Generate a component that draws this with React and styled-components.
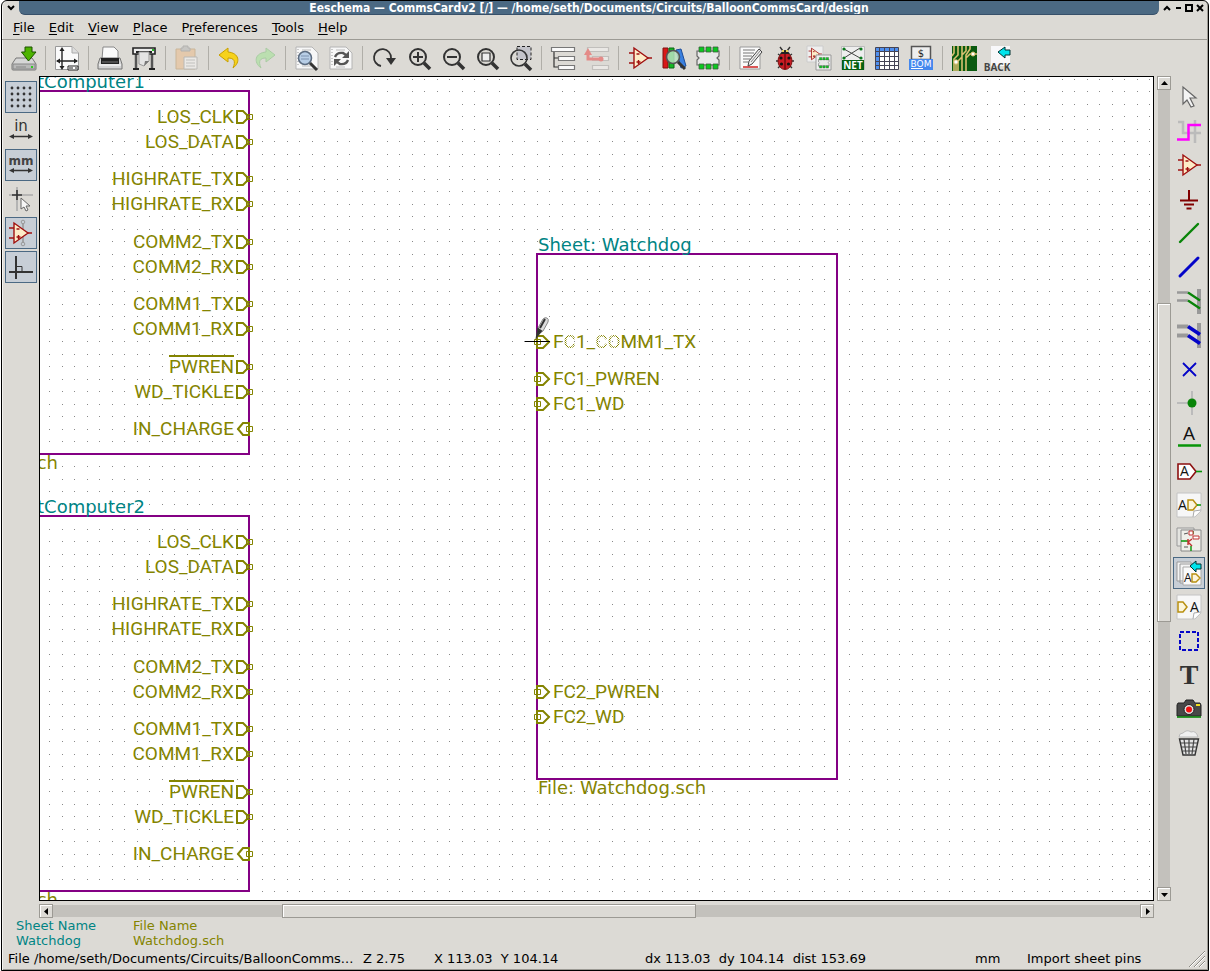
import React from 'react';
import styled, { createGlobalStyle, css } from 'styled-components';

const GlobalStyle = createGlobalStyle`
  * { box-sizing: border-box; }
  html, body, #root { height: 100%; }
  body { margin: 0; background: #fff; overflow: hidden; }
`;

const ui = '"DejaVu Sans", Verdana, sans-serif';
const face = '#dcdad5';
const trough = '#c3c1bc';
const edge = '#9c9a94';
const olive = '#848400';
const teal = '#008484';
const purple = '#840084';

const Window = styled.div`
  display: flex;
  flex-direction: column;
  height: 100%;
  min-height: 480px;
  margin: 0 1px;
  border: 1px solid #000;
  border-radius: 6px 6px 0 0;
  background: ${face};
  box-shadow: inset 1px 0 #f4f3f0, inset -1px -1px #9c9a94;
  color: #000;
  font: 13px/15px ${ui};
  overflow: hidden;
`;

const TitleBar = styled.header`
  display: flex;
  flex: none;
  height: 14px;
`;

const Title = styled.h1`
  flex: 1;
  margin: 0;
  overflow: hidden;
  border-bottom: 1px solid #37506a;
  border-radius: 0 0 6px 6px;
  background: #4b6983;
  color: #fff;
  font: bold 12px/14px "DejaVu Sans Condensed", ${ui};
  text-align: center;
  white-space: nowrap;
`;

const TitleButtons = styled.div`
  display: flex;
  align-items: center;
  justify-content: center;
  width: ${(p) => p.$width}px;
  gap: 1px;
`;

const TitleButton = styled.button`
  display: flex;
  width: 10px;
  height: 12px;
  padding: 1px 0;
  border: 0;
  background: none;
`;

const MenuBar = styled.nav`
  display: flex;
  flex: none;
  height: 25px;
  padding: 0 4px;
  border-bottom: 1px solid ${edge};
`;

const MenuItem = styled.button`
  padding: 1px 7px 0;
  border: 0;
  background: none;
  color: #000;
  font: 13px/24px ${ui};

  u { text-underline-offset: 2px; }
`;

const ToolBar = styled.div`
  display: flex;
  flex: none;
  align-items: center;
  height: 36px;
  padding: 0 5px;
`;

const ToolButton = styled.button`
  display: flex;
  flex: none;
  align-items: center;
  justify-content: center;
  width: 34px;
  height: 34px;
  padding: 0;
  border: 0;
  background: none;

  &:disabled { opacity: 0.4; }
`;

const Separator = styled.span`
  flex: none;
  width: 1px;
  height: 24px;
  margin: 0 4px;
  background: #b0aea8;
`;

const Workspace = styled.div`
  display: grid;
  flex: 1;
  grid-template-columns: 37px minmax(0, 1fr) 14px 37px;
  grid-template-rows: minmax(0, 1fr) 14px;
  row-gap: 3px;
  min-height: 0;
`;

const SideBar = styled.div`
  display: flex;
  grid-column: ${(p) => p.$column};
  grid-row: 1 / 3;
  flex-direction: column;
  gap: 2px;
  padding: 5px 2px 0 ${(p) => (p.$column === 1 ? 3 : 2)}px;
`;

const SideButton = styled.button`
  display: flex;
  flex: none;
  align-items: center;
  justify-content: center;
  width: 32px;
  height: 32px;
  padding: 0;
  border: 1px solid transparent;
  background: none;
  ${(p) => p.$active && css`
    border-color: #4b6983;
    background: #c7ced6;
  `}
`;

const Canvas = styled.main`
  position: relative;
  grid-column: 2;
  grid-row: 1;
  margin-right: 3px;
  border: 1px solid #000;
  background: #fff;
  overflow: hidden;
`;

const GridDots = styled.svg`
  display: block;
  width: 100%;
  height: 100%;
`;

const Sheet = styled.section`
  position: absolute;
  left: ${(p) => p.$x}px;
  top: ${(p) => p.$y}px;
  width: ${(p) => p.$w}px;
  height: ${(p) => p.$h}px;
  border: 2px solid ${purple};
`;

const SheetText = styled.div`
  position: absolute;
  ${(p) => (p.$side === 'right' ? 'right: 103px;' : 'left: 0;')}
  ${(p) => (p.$at === 'top' ? 'bottom: 100%;' : 'top: 100%;')}
  color: ${(p) => (p.$at === 'top' ? teal : olive)};
  font: 18px/20px ${ui};
  white-space: pre;
`;

const FileText = styled(SheetText)`
  ${(p) => p.$side === 'right' && 'right: 190px;'}
`;

const Pin = styled.div`
  position: absolute;
  top: ${(p) => p.$y}px;
  ${(p) => (p.$side === 'right' ? 'right: -5px;' : 'left: -4px;')}
  display: flex;
  flex-direction: ${(p) => (p.$side === 'right' ? 'row-reverse' : 'row')};
  align-items: center;
  gap: 2px;
  height: 14px;
  color: ${olive};
  font: 19px/14px Roboto, "Liberation Sans", sans-serif;
  white-space: nowrap;

  svg { flex: none; }
`;

const PinName = styled.span`
  position: relative;
  ${(p) => p.$barred && css`
    &::before {
      content: '';
      position: absolute;
      top: -5px;
      left: 0;
      right: 0;
      height: 2px;
      background: ${olive};
    }
  `}
`;

const Faded = styled.span`
  mask-image: repeating-conic-gradient(#000 0 25%, transparent 0 50%);
  mask-size: 2px 2px;
`;

const Pointer = styled.svg`
  position: absolute;
  left: 485px;
  top: 238px;
`;

const Scroller = styled.div`
  display: flex;
  flex-direction: ${(p) => (p.$vertical ? 'column' : 'row')};
  grid-column: ${(p) => (p.$vertical ? 3 : 2)};
  grid-row: ${(p) => (p.$vertical ? 1 : 2)};
  margin-right: ${(p) => (p.$vertical ? 0 : 3)}px;
`;

const ScrollButton = styled.button`
  display: flex;
  flex: none;
  align-items: center;
  justify-content: center;
  width: 14px;
  height: 14px;
  padding: 0;
  border: 1px solid ${edge};
  background: ${face};
  box-shadow: inset 1px 1px #fff;
`;

const Trough = styled.span`
  flex: ${(p) => p.$part} 1 0;
  margin: ${(p) => (p.$vertical ? '0 1px' : '1px 0')};
  background: ${trough};
`;

const Thumb = styled.span`
  flex: ${(p) => p.$part} 1 0;
  border: 1px solid ${edge};
  background: ${face};
  box-shadow: inset 1px 1px #fff;
`;

const MessagePanel = styled.dl`
  display: flex;
  flex: none;
  gap: 37px;
  margin: 0;
  padding: 0 14px;
  height: 31px;
`;

const Message = styled.div`
  color: ${(p) => p.$color};

  dt, dd { margin: 0; }
`;

const StatusBar = styled.footer`
  position: relative;
  display: grid;
  flex: none;
  grid-template-columns: 355fr 71fr 211fr 330fr 52fr 181fr;
  height: 21px;
  padding-left: 6px;
  line-height: 19px;
  white-space: pre;

  span { min-width: 0; }
`;

const Grip = styled.svg`
  position: absolute;
  right: 3px;
  bottom: 3px;
`;

const page = '#f7f7f7';
const ink = '#333';

const OpAmp = ({ x = 0, y = 0, s = 1 }) => (
  <g transform={`translate(${x} ${y}) scale(${s})`} fill="none" stroke="#a01010" strokeWidth="1.4">
    <path d="M6 2v20l14-10z" fill="#fdecc8" />
    <path d="M1 7h5M1 17h5M20 12h4M8.500 8h3M8.500 16h4M10.500 14v4" />
  </g>
);

const Chip = ({ x = 0, y = 0, s = 1 }) => (
  <g transform={`translate(${x} ${y}) scale(${s})`}>
    <path d="M1 5h22v5l-2 2 2 2v5H1v-5l2-2-2-2z" fill="#e8e8e8" stroke="#666" strokeWidth="1.200" />
    <path d="M3 1h5v5H3zM10 1h5v5h-5zM17 1h5v5h-5zM3 18h5v5H3zM10 18h5v5h-5zM17 18h5v5h-5z" fill="#0bc81f" stroke="#3c5c40" strokeWidth=".8" />
  </g>
);

const Lens = ({ children }) => (
  <g fill="none" stroke={ink}>
    <circle cx="12" cy="11" r="8" strokeWidth="2" />
    <path d="M18 17l6 6" strokeWidth="3.500" />
    {children}
  </g>
);

const SheetPage = () => (
  <path d="M1 1h16l6 6v16H1z" fill={page} stroke="#b4b4b4" />
);

const Label = ({ x, y, size = 14, children }) => (
  <text x={x} y={y} fontSize={size} fontFamily="Open Sans, sans-serif" fill="#111">{children}</text>
);

const Curl = () => (
  <g>
    <path d="M0 0h24v18l-6 6H0z" fill={page} stroke="#c4c4c4" />
    <path d="M24 17l-7 1-1 6" fill="#fff" stroke="#aaa" />
  </g>
);

const art = {
  save: (
    <g>
      <path d="M4 12h16l4 6v5q0 1-1 1H1q-1 0-1-1v-5z" fill="#d6d6d6" stroke="#777" />
      <path d="M1 18h22v5H1z" fill="#b9b9b9" stroke="#888" />
      <path d="M4 21h10" stroke="#888" />
      <path d="M19 20h2v2h-2z" fill="#2ecc1f" />
      <path d="M13 1h7v5h4l-7.500 9L9.500 6H13z" fill="#4db300" stroke="#1c5200" />
    </g>
  ),
  pageSettings: (
    <g fill="none" stroke="#222">
      <path d="M.5.500H17l6.500 6.500v16.500H.500z" fill="#fafafa" stroke="#999" />
      <path d="M17 .5V7h6.500" fill="#ddd" stroke="#aaa" />
      <path d="M7 3v19M2 15h20" strokeWidth="1.400" />
      <path d="M7 1l2.500 4h-5zM7 24l2.500-4h-5zM1 15l4-2.500v5zM23 15l-4-2.500v5z" fill="#222" stroke="none" />
      <path d="M13 20h10v4H13z" fill="#fff" />
      <path d="M14 22h4M20 22h2" />
    </g>
  ),
  print: (
    <g>
      <path d="M5 1h11l4 4v8H4z" fill="#fafafa" stroke="#888" />
      <path d="M2 12h20l2 6v5H0v-5z" fill="#d4d4d4" stroke="#777" />
      <path d="M3 12h18v6H3z" fill="#222" />
      <path d="M1 19h22" stroke="#fff" />
      <path d="M4 16h16" stroke="#777" />
    </g>
  ),
  plot: (
    <g>
      <path d="M4 7v15M20 7v15" stroke="#555" strokeWidth="2.500" />
      <path d="M1 23h6M17 23h6" stroke="#222" strokeWidth="2" />
      <path d="M1 2h22v6H1z" fill="#ededed" stroke="#222" strokeWidth="1.600" />
      <path d="M4 6h16" stroke="#222" strokeWidth="2" />
      <path d="M7 6h10v9l-5 5-5-2z" fill="#e4e4e4" stroke="#999" />
      <path d="M12 20l1-5h4z" fill="#777" />
      <path d="M20 3h2v2h-2z" fill="#2b2" />
    </g>
  ),
  paste: (
    <g>
      <path d="M1 3h19v20H1z" fill="#f0b070" stroke="#b0803e" />
      <path d="M6 5V2h2V0h5v2h2v3z" fill="#aaa" stroke="#777" />
      <path d="M9 11h13v12H9z" fill="#fff" stroke="#888" />
      <path d="M11 14h9M11 17h9M11 20h9" stroke="#999" />
    </g>
  ),
  undo: <path d="M10 2L1 9l9 7v-4c6 0 8 3 5 10 8-6 6-15-5-16z" fill="#f6d21c" stroke="#c8a000" />,
  redo: <path d="M14 2l9 7-9 7v-4c-6 0-8 3-5 10C1 16 3 7 14 6z" fill="#8be87a" stroke="#5fb45a" />,
  find: (
    <g>
      <SheetPage />
      <path d="M3 3v18" stroke="#999" strokeDasharray="1 2" />
      <path d="M7 4h9M7 20h9" stroke="#bbb" />
      <circle cx="10" cy="12" r="6.500" fill="#b8cee6" stroke="#5c6c80" strokeWidth="1.600" />
      <path d="M6 10h8M6 13h8" stroke="#7c92b0" />
      <path d="M15 17l7 7" stroke={ink} strokeWidth="3" />
    </g>
  ),
  replace: (
    <g>
      <SheetPage />
      <path d="M3 3v18" stroke="#999" strokeDasharray="1 2" />
      <path d="M7 4h9M7 21h9" stroke="#bbb" />
      <path d="M6 11q2-5 8-4l3 2M19 14q-2 5-8 4l-3-2" fill="none" stroke="#555" strokeWidth="2.400" />
      <path d="M20 5v7h-7zM5 20v-7h7z" fill="#555" />
    </g>
  ),
  redraw: (
    <g>
      <path d="M9 20A8.500 8.500 0 1 1 19 12" fill="none" stroke={ink} strokeWidth="1.800" />
      <path d="M14 12h10l-5 7z" fill={ink} />
    </g>
  ),
  zoomIn: <Lens><path d="M7 11h10M12 6v10" strokeWidth="2" /></Lens>,
  zoomOut: <Lens><path d="M7 11h10" strokeWidth="2" /></Lens>,
  zoomFit: <Lens><path d="M8 7h8v8H8z" fill="#eee" strokeWidth="1.200" /></Lens>,
  zoomArea: (
    <g>
      <path d="M9 .5h14v13H9z" fill="#c4c4ca" stroke="#222" strokeDasharray="3 2" />
      <g fill="none" stroke={ink}>
        <circle cx="11" cy="12" r="8" strokeWidth="1.600" />
        <path d="M17 18l6 6" strokeWidth="3.500" />
      </g>
    </g>
  ),
  hierarchy: (
    <g fill="#fafafa" stroke="#777" strokeWidth="1.200">
      <path d="M3 6v15h4M3 12h4" fill="none" stroke={ink} />
      <path d="M.500 1.500h23v4H.500zM7.500 10.500h16v4h-16zM7.500 19.500h16v4h-16z" />
    </g>
  ),
  leaveSheet: (
    <g fill="#fff" stroke="#999" strokeWidth="1.200">
      <path d="M2.500 1.500h21v4h-21zM7.500 10.500h16v4h-16zM7.500 19.500h16v4h-16z" />
      <path d="M3 8v5h13" fill="none" stroke="#f01818" strokeWidth="3" />
      <path d="M3 2l4 7H-1z" fill="#f01818" stroke="none" />
      <circle cx="16" cy="13" r="2.500" fill="#f01818" stroke="none" />
    </g>
  ),
  opamp: <OpAmp />,
  library: (
    <g>
      <path d="M1 2h5v20H1z" fill="#d81818" stroke="#801010" />
      <path d="M7 2h5v20H7z" fill="#14b824" stroke="#0a6412" />
      <path d="M14 4l5-1 5 17-5 2z" fill="#3a80e0" stroke="#1c4c98" />
      <circle cx="11" cy="11" r="6.500" fill="#b8e0c0" fillOpacity=".85" stroke="#555" strokeWidth="1.600" />
      <path d="M16 16l7 7" stroke={ink} strokeWidth="3" />
    </g>
  ),
  footprint: <Chip />,
  annotate: (
    <g>
      <path d="M1 1h20v22H1z" fill="#fafafa" stroke="#999" />
      <path d="M4 4h12M4 7h11M4 10h9M4 13h7M4 16h5" stroke="#777" />
      <path d="M4 21h15" stroke="#d02020" strokeWidth="1.500" />
      <path d="M9 20l1-5L20 3l3 3-10 12z" fill="#eee" stroke="#444" />
      <path d="M12 16l9-11" stroke="#888" />
    </g>
  ),
  erc: (
    <g>
      <path d="M5 8l3 2M19 8l-3 2M3 15h4M21 15h-4M5 22l3-3M19 22l-3-3M7 1l3 4M17 1l-3 4" stroke="#333" strokeWidth="1.400" />
      <ellipse cx="12" cy="15" rx="7" ry="8.500" fill="#c81c24" stroke="#801010" />
      <path d="M7 8q5-8 10 0z" fill="#222" />
      <path d="M9 5h2M13 5h2" stroke="#e8d060" strokeWidth="2" />
      <path d="M12 8v15" stroke="#400" />
      <g fill="#111"><circle cx="8" cy="12" r="1.600" /><circle cx="16" cy="12" r="1.600" /><circle cx="8.500" cy="18" r="1.600" /><circle cx="15.500" cy="18" r="1.600" /></g>
    </g>
  ),
  cvpcb: (
    <g>
      <path d="M0 0h16v16H0z" fill="#eee" stroke="#ccc" />
      <OpAmp x="1" y="1" s=".58" />
      <path d="M9 9h15v15H9z" fill="#f0f0f0" stroke="#999" />
      <Chip x="11" y="11" s=".48" />
    </g>
  ),
  netlist: (
    <g>
      <path d="M.500.500h23v23H.500z" fill="#eee" stroke="#bbb" />
      <path d="M3 3l16 9M19 2L3 12" stroke="#444" />
      <g fill="#0a7a1c"><circle cx="3" cy="3" r="1.600" /><circle cx="20" cy="3" r="1.600" /><circle cx="3" cy="12" r="1.600" /><circle cx="20" cy="12" r="1.600" /></g>
      <path d="M1 14h22v10H1z" fill="#066012" />
      <text x="12" y="23" fontSize="10" fontWeight="bold" fontFamily="Open Sans, sans-serif" fill="#fff" textAnchor="middle">NET</text>
    </g>
  ),
  fields: (
    <g>
      <path d="M.500 1.500h23v22H.500z" fill="#fff" />
      <path d="M.500 1.500h23v4H.500zM.500 1.500h4v22h-4z" fill="#4f8fef" />
      <path d="M.500 1.500h23v22H.500zM4.500 1.500v22M9.500 1.500v22M14.500 1.500v22M19.500 1.500v22M.500 5.500h23M.500 10.500h23M.500 15.500h23M.500 19.500h23" fill="none" stroke="#445" />
    </g>
  ),
  bom: (
    <g>
      <path d="M2.500.500h19v13h-19z" fill="#eee" stroke="#555" strokeWidth="1.500" />
      <text x="12" y="11" fontSize="10" fontFamily="DejaVu Sans, sans-serif" fill="#222" textAnchor="middle">$</text>
      <path d="M0 13h24v11H0z" fill="#4588ee" />
      <text x="12" y="21" fontSize="9" fontFamily="DejaVu Sans, sans-serif" fill="#fff" textAnchor="middle">BOM</text>
      <path d="M2 22.500h12" stroke="#fff" />
    </g>
  ),
  pcb: (
    <g>
      <path d="M0 0h25v25H0z" fill="#0a5a10" />
      <path d="M2 0v7l-2 3M6 0v9l-4 4v12M10 0v11l-4 4v10M14 0v5l-4 4v16M18 0v3l-4 6v16M4 16v9M25 8h-7l-4 4" fill="none" stroke="#d8c070" strokeWidth="1.600" />
      <circle cx="4" cy="16" r="2.200" fill="#fff" stroke="#d8c070" />
      <circle cx="21" cy="8" r="2" fill="#fff" stroke="#d8c070" />
    </g>
  ),
  back: (
    <g>
      <path d="M5 0h19v20H5z" fill="#f8f8fa" />
      <path d="M12 6l7-5v3h5v5h-5v3z" fill="#00e4ec" stroke="#033" />
      <text x="11" y="25" fontSize="10" fontWeight="bold" fontFamily="Open Sans, sans-serif" fill="#444" textAnchor="middle">BACK</text>
    </g>
  ),
  grid: (
    <g fill="#333">
      {[3, 9, 15, 21].flatMap((y) => [3, 9, 15, 21].map((x) => <circle key={`${x}-${y}`} cx={x} cy={y} r="1.400" />))}
    </g>
  ),
  inches: (
    <g>
      <text x="12" y="12" fontSize="15" fontFamily="DejaVu Sans, sans-serif" fill="#333" textAnchor="middle">in</text>
      <path d="M3 17.500h18" stroke="#333" strokeWidth="1.400" /><path d="M0 17.500l5-2.500v5zM24 17.500l-5-2.500v5z" fill="#333" />
    </g>
  ),
  millimetres: (
    <g>
      <text x="12" y="12" fontSize="12" fontWeight="bold" fontFamily="DejaVu Sans, sans-serif" fill="#444" textAnchor="middle">mm</text>
      <path d="M3 17.500h18" stroke="#333" strokeWidth="1.400" /><path d="M0 17.500l5-2.500v5zM24 17.500l-5-2.500v5z" fill="#333" />
    </g>
  ),
  cursorShape: (
    <g>
      <path d="M0 8h24M8 0v24" stroke="#aaa" strokeWidth="1.600" />
      <path d="M3 8h10M8 3v10" stroke="#333" strokeWidth="1.600" />
      <path d="M12 11v11l3-2 2 4 2-1-2-4h4z" fill="#f6f6f6" stroke="#666" />
    </g>
  ),
  hiddenPins: (
    <g>
      <path d="M14 2v20" stroke="#999" strokeWidth="1.600" />
      <g fill="none" stroke="#999"><circle cx="14" cy="1" r="1.800" /><circle cx="14" cy="23" r="1.800" /></g>
      <OpAmp x="-1" />
    </g>
  ),
  ortho: (
    <g fill="none" stroke="#333">
      <path d="M7 1v23M0 17h24" strokeWidth="2" />
      <path d="M7 11.500h6V17" />
    </g>
  ),
  select: <path d="M6 2v17l4-4 4 7 3-1-4-8h6z" fill="#f4f4f4" stroke="#666" strokeWidth="1.200" />,
  highlight: (
    <g fill="none">
      <path d="M1 3h5v11h18M18 1v23" stroke="#bbb" strokeWidth="2.500" />
      <path d="M0 20.500h11.500V6H24" stroke="#f0f" strokeWidth="2.500" />
    </g>
  ),
  power: <path d="M12 3v10M3 13.500h18M7 17.500h10M9.500 21.500h5" stroke="#800000" strokeWidth="2" />,
  wire: <path d="M3 21L21 3" stroke="#088408" strokeWidth="2.400" strokeLinecap="round" />,
  bus: <path d="M3 21L21 3" stroke="#0404c8" strokeWidth="3" strokeLinecap="round" />,
  wireEntry: (
    <g fill="none">
      <path d="M22 0v25" stroke="#999" strokeWidth="4" /><path d="M0 3.500h11M0 11.500h11" stroke="#999" strokeWidth="2.500" />
      <path d="M11 3.500l12 8M11 11.500l12 8" stroke="#088408" strokeWidth="2.200" />
    </g>
  ),
  busEntry: (
    <g fill="none">
      <path d="M22 0v25" stroke="#999" strokeWidth="4" /><path d="M0 3.500h11M0 12.500h11" stroke="#999" strokeWidth="4" />
      <path d="M11 3.500l12 8M11 12.500l12 8" stroke="#0404c8" strokeWidth="3.500" />
    </g>
  ),
  noConnect: <path d="M6 6l13 13M19 6L6 19" stroke="#0404c8" strokeWidth="1.800" />,
  junction: (
    <g>
      <path d="M0 12h15M15 0v24" stroke="#bbb" strokeWidth="2" />
      <circle cx="15" cy="12" r="4.500" fill="#088408" />
    </g>
  ),
  netLabel: (
    <g>
      <text x="12" y="15" fontSize="19" fontFamily="Open Sans, sans-serif" fill="#111" textAnchor="middle">A</text>
      <path d="M1 20.500h23" stroke="#089408" strokeWidth="2.500" />
    </g>
  ),
  globalLabel: (
    <g>
      <path d="M1 5h12l6 7.500-6 7.500H1z" fill="#fff" stroke="#8c1010" strokeWidth="1.600" />
      <path d="M19 12.500h6" stroke="#089408" strokeWidth="1.600" />
      <Label x="3" y="17">A</Label>
    </g>
  ),
  hierLabel: (
    <g>
      <Curl />
      <Label x="1" y="17">A</Label>
      <path d="M11 7h5l4 5-4 5h-5z" fill="#fdf6dc" stroke="#b89010" strokeWidth="1.500" />
      <path d="M20 12h4" stroke="#089408" strokeWidth="1.500" />
    </g>
  ),
  addSheet: (
    <g fill="none">
      <path d="M0 1h17v18H0z" fill="#e4e4e0" stroke="#999" />
      <path d="M4 3h20v21H4z" fill="#efefea" stroke="#888" />
      <path d="M4 14h7M16 4v3M14 19v5" stroke="#089408" strokeWidth="1.400" />
      <path d="M12 4h4v4h-4zM16 9h6v3h-6z" fill="#fff" stroke="#c03030" />
      <path d="M11 12v6M11 15l4-3M11 15l4 4" stroke="#c03030" strokeWidth="1.400" />
      <path d="M7 7l4-1M7 20h4" stroke="#555" />
    </g>
  ),
  importPin: (
    <g>
      <path d="M0 1h14v19H0zM3 3h14v19H3z" fill="#f4f4f4" stroke="#999" />
      <path d="M6 6h18v18H6z" fill="#fafafa" stroke="#aaa" />
      <path d="M13 5l6-5v3h5v5h-5v3z" fill="#00e4ec" stroke="#033" />
      <Label x="7" y="21" size={12}>A</Label>
      <path d="M15 13h4l4 4-4 4h-4z" fill="#fdf6dc" stroke="#b89010" strokeWidth="1.400" />
    </g>
  ),
  sheetPin: (
    <g>
      <Curl />
      <path d="M1 7h5l4 5-4 5H1z" fill="#fdf6dc" stroke="#b89010" strokeWidth="1.500" />
      <Label x="13" y="17">A</Label>
    </g>
  ),
  graphicLine: <path d="M3 3h18v18H3z" fill="none" stroke="#0404c8" strokeWidth="2" strokeDasharray="4 2" />,
  text: (
    <text x="12" y="21" fontSize="28" fontWeight="bold" fontFamily="Liberation Serif, serif" fill="#333" textAnchor="middle">T</text>
  ),
  image: (
    <g>
      <path d="M1 6h6l2-3h7l2 3h5l1 2v11H0V8z" fill="#484848" stroke="#222" />
      <path d="M19 7h4v2h-4z" fill="#f0e020" />
      <circle cx="12" cy="12.500" r="5" fill="#ddd" stroke="#222" />
      <circle cx="12" cy="12.500" r="3" fill="#f01010" />
      <path d="M0 20h24" stroke="#088408" strokeWidth="1.600" />
    </g>
  ),
  trash: (
    <g>
      <path d="M2 6q0-4 4-4 4-4 8-1 5-2 7 5z" fill="#f0f0f0" stroke="#bbb" />
      <path d="M2.500 8h19L18 24H6z" fill="#e4e4e4" stroke="#333" strokeWidth="1.400" />
      <path d="M7 8l2 15M12 8v15M17 8l-2 15M4 12h16M5 16h14M6 20h12" stroke="#444" strokeWidth="1.200" />
    </g>
  ),
};

const Icon = ({ name }) => (
  <svg width="24" height="24" viewBox="0 0 24 24" overflow="visible" aria-hidden="true">{art[name]}</svg>
);

const topTools = [
  [['save', 'Save']],
  [['pageSettings', 'Page settings']],
  [['print', 'Print'], ['plot', 'Plot']],
  [['paste', 'Paste', true]],
  [['undo', 'Undo'], ['redo', 'Redo', true]],
  [['find', 'Find'], ['replace', 'Find and replace']],
  [['redraw', 'Redraw'], ['zoomIn', 'Zoom in'], ['zoomOut', 'Zoom out'], ['zoomFit', 'Zoom to fit'], ['zoomArea', 'Zoom to selection']],
  [['hierarchy', 'Navigate hierarchy'], ['leaveSheet', 'Leave sheet', true]],
  [['opamp', 'Symbol editor'], ['library', 'Browse libraries'], ['footprint', 'Footprint editor']],
  [['annotate', 'Annotate'], ['erc', 'Electrical rules check'], ['cvpcb', 'Assign footprints'], ['netlist', 'Netlist'], ['fields', 'Field table'], ['bom', 'Bill of materials']],
  [['pcb', 'Run PCB editor'], ['back', 'Back-import footprints']],
];

const leftTools = [
  ['grid', 'Show grid', true], ['inches', 'Inches'], ['millimetres', 'Millimetres', true],
  ['cursorShape', 'Cursor shape'], ['hiddenPins', 'Hidden pins', true], ['ortho', 'Orthogonal wires', true],
];

const rightTools = [
  ['select', 'Select'], ['highlight', 'Highlight net'], ['opamp', 'Place symbol'], ['power', 'Place power port'],
  ['wire', 'Place wire'], ['bus', 'Place bus'], ['wireEntry', 'Wire to bus entry'], ['busEntry', 'Bus to bus entry'],
  ['noConnect', 'No connect'], ['junction', 'Junction'], ['netLabel', 'Net label'], ['globalLabel', 'Global label'],
  ['hierLabel', 'Hierarchical label'], ['addSheet', 'Hierarchical sheet'], ['importPin', 'Import sheet pin', true],
  ['sheetPin', 'Sheet pin'], ['graphicLine', 'Graphic line'], ['text', 'Text'], ['image', 'Image'], ['trash', 'Delete'],
];

const menus = ['File', 'Edit', 'View', 'Place', ['P', 'r', 'eferences'], 'Tools', 'Help'];

const computerPins = [
  ['LOS_CLK', 18], ['LOS_DATA', 43], ['HIGHRATE_TX', 80], ['HIGHRATE_RX', 105], ['COMM2_TX', 143], ['COMM2_RX', 168],
  ['COMM1_TX', 205], ['COMM1_RX', 230], ['PWREN', 268, 'bar'], ['WD_TICKLE', 293], ['IN_CHARGE', 330, 'in'],
];

const watchdogPins = [['FC1_PWREN', 117], ['FC1_WD', 142], ['FC2_PWREN', 430], ['FC2_WD', 455]];

const PinMark = ({ side, input }) => {
  const box = side === 'right' ? 10 : 0;
  let d = 'M1 1H7L13 7L7 13H1Z';
  if (input) d = 'M2 7L7 1H13V13H7Z';
  if (side === 'left') d = 'M3 1H9L15 7L9 13H3Z';
  return (
    <svg width="17" height="14" viewBox="0 0 17 14" fill="none" stroke={olive}>
      <path d={d} strokeWidth="2" />
      <path d={`M${box + 0.5} 4.500h6v5h-6z`} />
    </svg>
  );
};

const ComputerSheet = ({ y, h, name }) => (
  <Sheet $x={-260} $y={y} $w={470} $h={h}>
    <SheetText $side="right" $at="top">{name}</SheetText>
    {computerPins.map(([label, top, kind]) => (
      <Pin key={label} $side="right" $y={top}>
        <PinMark side="right" input={kind === 'in'} />
        <PinName $barred={kind === 'bar'}>{label}</PinName>
      </Pin>
    ))}
    <FileText $side="right" $at="bottom">ch</FileText>
  </Sheet>
);

const arrows = {
  up: 'M1 6h7L4.500 2z', down: 'M1 3h7L4.500 7z', left: 'M6 1v7L2 4.500z', right: 'M3 1v7l4-3.500z',
};

const Arrow = ({ to }) => (
  <ScrollButton aria-label={`Scroll ${to}`}>
    <svg width="9" height="9"><path d={arrows[to]} /></svg>
  </ScrollButton>
);

const glyphs = [
  ['Shade', 'M2 7l3-3 3 3'], ['Minimise', 'M3 5h5'], ['Maximise', 'M2 2h6v6H2z'], ['Close', 'M2 2l6 6M8 2L2 8'],
];

const Glyph = ({ d }) => (
  <svg width="10" height="10" fill="none" stroke="#000" strokeWidth="2"><path d={d} /></svg>
);

export default function App() {
  return (
    <>
      <GlobalStyle />
      <Window>
        <TitleBar>
          <TitleButtons $width={17}>
            <TitleButton aria-label="Window menu"><Glyph d="M2 3l3 3 3-3" /></TitleButton>
          </TitleButtons>
          <Title>Eeschema — CommsCardv2 [/] — /home/seth/Documents/Circuits/BalloonCommsCard/design</Title>
          <TitleButtons $width={49}>
            {glyphs.map(([label, d]) => (
              <TitleButton key={label} aria-label={label}><Glyph d={d} /></TitleButton>
            ))}
          </TitleButtons>
        </TitleBar>

        <MenuBar>
          {menus.map((m) => {
            const [pre, key, rest] = Array.isArray(m) ? m : ['', m[0], m.slice(1)];
            return <MenuItem key={key + rest}>{pre}<u>{key}</u>{rest}</MenuItem>;
          })}
        </MenuBar>

        <ToolBar role="toolbar">
          {topTools.map((group, i) => (
            <React.Fragment key={group[0][0]}>
              {i > 0 && <Separator />}
              {group.map(([icon, label, off]) => (
                <ToolButton key={icon} aria-label={label} disabled={!!off}><Icon name={icon} /></ToolButton>
              ))}
            </React.Fragment>
          ))}
        </ToolBar>

        <Workspace>
          <SideBar role="toolbar" $column={1}>
            {leftTools.map(([icon, label, on]) => (
              <SideButton key={icon} aria-label={label} aria-pressed={!!on} $active={on}><Icon name={icon} /></SideButton>
            ))}
          </SideBar>

          <Canvas>
            <GridDots aria-hidden="true">
              <pattern id="dots" width="25" height="25" patternUnits="userSpaceOnUse" fill="#888">
                <rect x="9" y="2" width="1" height="1" />
                <rect x="22" y="2" width="1" height="1" />
                <rect x="9" y="14" width="1" height="1" />
                <rect x="22" y="14" width="1" height="1" />
              </pattern>
              <rect width="100%" height="100%" fill="url(#dots)" />
            </GridDots>

            <ComputerSheet y={13} h={365} name="tComputer1" />
            <ComputerSheet y={438} h={377} name="tComputer2" />

            <Sheet $x={496} $y={176} $w={302} $h={527}>
              <SheetText $at="top">Sheet: Watchdog</SheetText>
              <Pin $side="left" $y={80}>
                <PinMark side="left" />
                <PinName>F<Faded>C</Faded>1_<Faded>CO</Faded>MM1_TX</PinName>
              </Pin>
              {watchdogPins.map(([label, top]) => (
                <Pin key={label} $side="left" $y={top}>
                  <PinMark side="left" />
                  <PinName>{label}</PinName>
                </Pin>
              ))}
              <FileText $at="bottom">File: Watchdog.sch</FileText>
            </Sheet>

            <Pointer width="26" height="28" viewBox="0 0 26 28" aria-hidden="true">
              <path d="M0 26.500h25" stroke="#000" />
              <path d="M12 20l1-7 5-9q2-2 4-1t1 4l-5 9z" fill="#ddd" stroke="#888" />
              <path d="M12 21l1-7 3 2zM15 13l5-9" fill="#222" stroke="#333" strokeWidth="2" />
            </Pointer>
          </Canvas>

          <Scroller $vertical>
            <Arrow to="up" />
            <Trough $vertical $part={214} /><Thumb $part={317} /><Trough $vertical $part={266} />
            <Arrow to="down" />
          </Scroller>

          <SideBar role="toolbar" $column={4}>
            {rightTools.map(([icon, label, on]) => (
              <SideButton key={icon} aria-label={label} $active={on}><Icon name={icon} /></SideButton>
            ))}
          </SideBar>

          <Scroller>
            <Arrow to="left" />
            <Trough $part={229} /><Thumb $part={413} /><Trough $part={445} />
            <Arrow to="right" />
          </Scroller>
        </Workspace>

        <MessagePanel>
          <Message $color={teal}><dt>Sheet Name</dt><dd>Watchdog</dd></Message>
          <Message $color={olive}><dt>File Name</dt><dd>Watchdog.sch</dd></Message>
        </MessagePanel>

        <StatusBar>
          <span>File /home/seth/Documents/Circuits/BalloonComms...</span>
          <span>Z 2.75</span>
          <span>{'X 113.03  Y 104.14'}</span>
          <span>{'dx 113.03  dy 104.14  dist 153.69'}</span>
          <span>mm</span>
          <span>Import sheet pins</span>
          <Grip width="17" height="17" stroke="#8c8a84" aria-hidden="true">
            <path d="M1 17L17 1M6 17L17 6M11 17l6-6" />
            <path d="M2 17L17 2M7 17L17 7M12 17l5-5" stroke="#fff" />
          </Grip>
        </StatusBar>
      </Window>
    </>
  );
}
